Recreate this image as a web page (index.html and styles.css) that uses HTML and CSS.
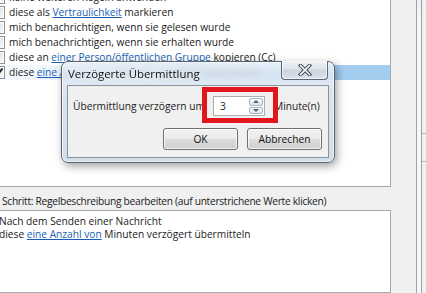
FILE: index.html
```html
<!DOCTYPE html>
<html lang="de">
<head>
<meta charset="utf-8">
<title>Regeln</title>
<link rel="stylesheet" href="styles.css">
</head>
<body>
<div class="window">
  <div class="main">
    <div class="listbox">
      <ul class="rules">
        <li class="rule"><span class="cb"></span><span>keine weiteren Regeln anwenden</span></li>
        <li class="rule"><span class="cb"></span><span>diese als <a class="lnk">Vertraulichkeit</a> markieren</span></li>
        <li class="rule"><span class="cb"></span><span>mich benachrichtigen, wenn sie gelesen wurde</span></li>
        <li class="rule"><span class="cb"></span><span>mich benachrichtigen, wenn sie erhalten wurde</span></li>
        <li class="rule"><span class="cb"></span><span>diese an <a class="lnk">einer Person/öffentlichen Gruppe</a> kopieren (Cc)</span></li>
        <li class="rule sel"><span class="cb"><svg class="tick" width="11" height="11" viewBox="0 0 11 11"><polyline points="1.5,5.5 4,8.5 9.5,1.5" fill="none" stroke="#1a1a1a" stroke-width="1.9"/></svg></span><span>diese <a class="lnk">eine Anzahl von</a> Minuten verzögert übermitteln</span></li>
      </ul>
    </div>
    <div class="step">Schritt: Regelbeschreibung bearbeiten (auf unterstrichene Werte klicken)</div>
    <div class="desc">
      <p class="line">Nach dem Senden einer Nachricht</p>
      <p class="line">diese <a class="lnk">eine Anzahl von</a> Minuten verzögert übermitteln</p>
    </div>
  </div>
  <div class="side">
    <div class="rail"></div>
    <div class="pane">
      <div class="pane-top"></div>
      <div class="pane-mid"></div>
      <div class="pane-bot"></div>
    </div>
  </div>
</div>

<div class="dialog">
  <div class="titlebar">
    <span class="title">Verzögerte Übermittlung</span>
    <div class="close">
      <svg width="14" height="12" viewBox="0 0 14 12">
        <path d="M2.5 1.5 L11.5 10.5 M11.5 1.5 L2.5 10.5" stroke="#3e4650" stroke-width="3.6" stroke-linecap="square" fill="none"/>
        <path d="M2.5 1.5 L11.5 10.5 M11.5 1.5 L2.5 10.5" stroke="#ffffff" stroke-width="1.6" stroke-linecap="square" fill="none"/>
      </svg>
    </div>
  </div>
  <div class="client">
    <div class="row">
      <span class="lbl">Übermittlung verzögern um</span>
      <div class="spin">
        <span class="val">3</span>
        <div class="arrows">
          <span class="arrow"><span class="tri-up"></span></span>
          <span class="arrow"><span class="tri-dn"></span></span>
        </div>
      </div>
      <span class="unit">Minute(n)</span>
    </div>
    <div class="buttons">
      <button class="btn">OK</button>
      <button class="btn">Abbrechen</button>
    </div>
    <div class="mark"></div>
  </div>
</div>
</body>
</html>
```
FILE: styles.css
```css
html, body {
  margin: 0;
  padding: 0;
}
body {
  width: 426px;
  height: 293px;
  overflow: hidden;
  position: relative;
  background: #f0f0f0;
  font-family: "Open Sans", "Noto Sans", sans-serif;
  font-size: 10.2px;
  color: #1b1b1b;
}

.window {
  display: flex;
  height: 293px;
}

.main {
  width: 392px;
  margin-left: -1px;
  display: flex;
  flex-direction: column;
}

.listbox {
  height: 187px;
  box-sizing: border-box;
  border: 1px solid #a3a9b0;
  border-top: none;
  background: #fff;
  overflow: hidden;
}

.rules {
  list-style: none;
  margin: -10px 0 0;
  padding: 0;
}

.rule {
  height: 15px;
  line-height: 15px;
  display: flex;
  align-items: center;
  white-space: nowrap;
}

.rule.sel {
  background: linear-gradient(90deg, rgba(163, 205, 239, 0.12) 0, rgba(163, 205, 239, 0.2) 60px, #a3cdef 210px, #a3cdef 100%);
}

.cb {
  flex: none;
  width: 13px;
  height: 13px;
  box-sizing: border-box;
  margin-left: -8px;
  margin-right: 4px;
  border: 1px solid #8e8f8f;
  background: linear-gradient(135deg, #dcdcdc, #f8f8f8);
  box-shadow: inset 0 0 0 1px #fff;
  display: flex;
  align-items: center;
  justify-content: center;
}

.tick {
  display: block;
}

.lnk {
  color: #1a5fb4;
  text-decoration: underline;
}

.step {
  height: 23px;
  box-sizing: border-box;
  padding: 7px 0 0 3px;
  line-height: 14px;
  letter-spacing: -0.28px;
  white-space: nowrap;
}

.desc {
  flex: 1;
  margin-left: -1px;
  border: 1px solid #a3a9b0;
  background: #fff;
  padding: 4px 0 0 0;
}

.line {
  margin: 0;
  line-height: 13px;
  white-space: nowrap;
}

.side {
  flex: 1;
  display: flex;
  padding-left: 25px;
}

.rail {
  width: 4px;
  border-left: 1px solid #a2a2a2;
  border-right: 1px solid #a2a2a2;
  background: linear-gradient(#e4f1f6 0, #f6f6f6 14px, #f6f6f6);
}

.pane {
  flex: 1;
  display: flex;
  flex-direction: column;
}

.pane-top {
  height: 133px;
  border-bottom: 1px solid #b4b4b4;
}

.pane-mid {
  height: 27px;
  border-bottom: 1px solid #b4b4b4;
}

.pane-bot {
  flex: 1;
}

/* dialog overlay */
.dialog {
  position: absolute;
  left: 61px;
  top: 61px;
  width: 274px;
  height: 102px;
  box-sizing: border-box;
  border: 1px solid #5b6570;
  border-radius: 7px;
  padding: 0 5px 4px;
  display: flex;
  flex-direction: column;
  background: linear-gradient(180deg, rgba(236, 242, 248, 0.82) 0%, rgba(210, 222, 235, 0.8) 30%, rgba(200, 213, 228, 0.8) 100%);
  backdrop-filter: blur(3px);
  box-shadow: 2px 3px 8px rgba(0, 0, 0, 0.38), inset 0 0 0 1px rgba(255, 255, 255, 0.6);
}

.titlebar {
  height: 23px;
  display: flex;
  align-items: center;
  position: relative;
}

.title {
  padding-left: 1px;
  font-size: 11.4px;
  color: #111;
  text-shadow: 0 0 5px rgba(255, 255, 255, 0.9);
  white-space: nowrap;
}

.close {
  position: absolute;
  left: 214px;
  top: -1px;
  width: 47px;
  height: 19px;
  box-sizing: border-box;
  border: 1px solid #5c6672;
  border-top: none;
  border-radius: 0 0 4px 4px;
  background: linear-gradient(180deg, #eef2f6 0%, #dde4ec 45%, #cad4df 50%, #dbe3ec 100%);
  box-shadow: inset 0 0 0 1px rgba(255, 255, 255, 0.6);
  display: flex;
  align-items: center;
  justify-content: center;
}

.client {
  flex: 1;
  position: relative;
  border: 1px solid #87939f;
  background: #f0f0f0;
}

.row {
  display: flex;
  align-items: center;
  height: 20px;
  margin-top: 10px;
  padding-left: 5px;
  white-space: nowrap;
}

.lbl {
  flex: 0 0 140px;
}

.spin {
  flex: none;
  width: 52px;
  height: 20px;
  box-sizing: border-box;
  border: 1px solid #abadb3;
  background: #fff;
  display: flex;
}

.val {
  flex: 1;
  padding-left: 6px;
  line-height: 18px;
}

.arrows {
  width: 15px;
  display: flex;
  flex-direction: column;
  gap: 1px;
  padding: 1px 1px 1px 0;
  box-sizing: border-box;
}

.arrow {
  flex: 1;
  border: 1px solid #a9b3bd;
  border-radius: 2px;
  background: linear-gradient(#f8f9fa, #e1e6eb);
  display: flex;
  align-items: center;
  justify-content: center;
}

.tri-up {
  width: 0;
  height: 0;
  border-left: 3px solid transparent;
  border-right: 3px solid transparent;
  border-bottom: 3px solid #4e5f7a;
}

.tri-dn {
  width: 0;
  height: 0;
  border-left: 3px solid transparent;
  border-right: 3px solid transparent;
  border-top: 3px solid #4e5f7a;
}

.unit {
  margin-left: 9px;
}

.buttons {
  display: flex;
  justify-content: flex-end;
  gap: 9px;
  margin-top: 12px;
  padding-right: 6px;
}

.btn {
  width: 75px;
  height: 22px;
  padding: 0;
  border: 1px solid #707070;
  border-radius: 3px;
  background: linear-gradient(180deg, #f2f2f2 0%, #ebebeb 50%, #dddddd 50%, #cfcfcf 100%);
  box-shadow: inset 0 0 0 1px rgba(255, 255, 255, 0.7);
  font: inherit;
  color: #111;
}

.mark {
  position: absolute;
  left: 134px;
  top: 1px;
  width: 76px;
  height: 36px;
  box-sizing: border-box;
  border: 5px solid #e1171e;
}
```
